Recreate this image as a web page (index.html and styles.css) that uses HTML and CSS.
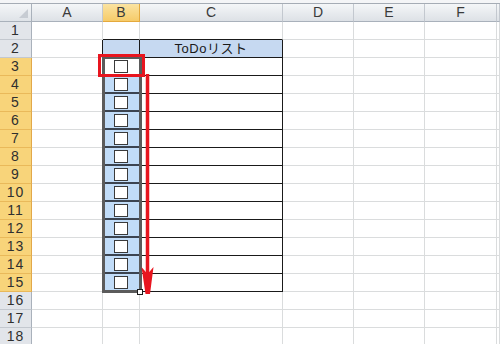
FILE: index.html
```html
<!DOCTYPE html>
<html lang="ja">

<head>
  <meta charset="UTF-8">
  <title>ToDoリスト</title>
  <link rel="stylesheet" href="styles.css">
</head>

<body>
  <div class="wrap">
    <div class="sheet" id="sheet"></div>

    <!-- selection B3:B15 -->
    <div class="selection"></div>
    <div class="handle"></div>

    <!-- red marks -->
    <svg class="marks" width="500" height="344" viewBox="0 0 500 344">
      <rect x="99.5" y="55.5" width="44" height="20" fill="none" stroke="#e8151f" stroke-width="3" />
      <line x1="147.5" y1="74" x2="147.5" y2="280" stroke="#e8151f" stroke-width="3.5" />
      <polygon points="141.5,267 147.5,274 153.5,267 150,294 145.5,294" fill="#e8151f" />
    </svg>
  </div>

  <script>
    var cols = ['', 'A', 'B', 'C', 'D', 'E', 'F', ''];
    var sheet = document.getElementById('sheet');

    function addCell(cls, html) {
      var div = document.createElement('div');
      div.className = cls;
      if (html) {
        div.innerHTML = html;
      }
      sheet.appendChild(div);
    }

    // column headers
    for (var i = 0; i < cols.length; i++) {
      if (i === 0) {
        addCell('corner', '<span class="tri"></span>');
      } else if (i === 2) {
        addCell('hdr hdr-sel', cols[i]);
      } else {
        addCell('hdr', cols[i]);
      }
    }

    for (var r = 1; r <= 18; r++) {
      var inSel = r >= 3 && r <= 15;
      addCell('rh' + (inSel ? ' rh-sel' : ''), r);

      // A
      addCell('cell' + (r >= 2 && r <= 15 ? ' edge-r' : ''));

      // B
      if (r === 1) {
        addCell('cell edge-b');
      } else if (r === 2) {
        addCell('cell tbl title');
      } else if (inSel) {
        addCell('cell tbl box' + (r > 3 ? ' sel' : ''), '<span class="chk"></span>');
      } else {
        addCell('cell');
      }

      // C
      if (r === 1) {
        addCell('cell edge-b');
      } else if (r === 2) {
        addCell('cell tbl title', 'ToDoリスト');
      } else if (inSel) {
        addCell('cell tbl');
      } else {
        addCell('cell');
      }

      // D, E, F, G
      for (var c = 4; c < cols.length; c++) {
        addCell('cell');
      }
    }
  </script>
</body>

</html>
```

FILE: styles.css
```css
* {
  box-sizing: border-box;
}

body {
  margin: 0;
  background: #ffffff;
  font-family: 'Liberation Sans', 'Noto Sans CJK JP', sans-serif;
  color: #333333;
}

.wrap {
  position: relative;
  width: 500px;
  height: 344px;
  overflow: hidden;
  padding-top: 3px;
  background: #f4f5f7;
}

.sheet {
  display: grid;
  grid-template-columns: 32px 71px 37px 143px 71px 71px 72px 1fr;
  grid-auto-rows: 18px;
  background: #ffffff;
  border-top: 1px solid #a5acb5;
}

/* headers */
.corner {
  position: relative;
  background: linear-gradient(#f4f6f8, #dfe3e8);
  border-right: 1px solid #a9b1bb;
  border-bottom: 1px solid #a9b1bb;
}

.tri {
  position: absolute;
  right: 3px;
  bottom: 3px;
  width: 0;
  height: 0;
  border-left: 9px solid transparent;
  border-bottom: 9px solid #c7ccd3;
}

.hdr {
  background: linear-gradient(#f4f6f8, #dde1e6);
  border-right: 1px solid #c3c8cf;
  border-bottom: 1px solid #a9b1bb;
  font-size: 14px;
  line-height: 17px;
  text-align: center;
  color: #3a3a3a;
}

.hdr-sel {
  background: linear-gradient(#fbe3a1, #f6cb69);
  border-right: 1px solid #e4a93d;
  border-bottom: 1px solid #e4a93d;
}

.rh {
  background: #e2e5ea;
  border-right: 1px solid #a9b1bb;
  border-bottom: 1px solid #c3c8cf;
  font-size: 14px;
  line-height: 17px;
  letter-spacing: 1px;
  text-align: center;
  color: #2f2f2f;
}

.rh-sel {
  background: #f8d47a;
  border-right: 1px solid #e2a84a;
  border-bottom: 1px solid #e9b95a;
}

/* cells */
.cell {
  border-right: 1px solid #dadcdd;
  border-bottom: 1px solid #dadcdd;
}

.edge-r {
  border-right: 1px solid #1a1a1a;
}

.edge-b {
  border-bottom: 1px solid #1a1a1a;
}

.tbl {
  border-right: 1px solid #1a1a1a;
  border-bottom: 1px solid #1a1a1a;
}

.title {
  background: #c6d9f1;
  font-size: 13px;
  line-height: 17px;
  letter-spacing: 0.5px;
  text-align: center;
  color: #1a1a1a;
}

.box {
  display: flex;
  align-items: center;
  justify-content: center;
  border-bottom: 2px solid #3c4450;
}

.sel {
  background: #c1dcf8;
}

.chk {
  width: 14px;
  height: 13px;
  margin-top: 1px;
  border: 1.5px solid #3a3a3a;
  background: #ffffff;
}

/* overlays */
.selection {
  position: absolute;
  left: 102px;
  top: 56px;
  width: 40px;
  height: 237px;
  border: 3px solid #5b5b5b;
}

.handle {
  position: absolute;
  left: 137px;
  top: 289px;
  width: 6px;
  height: 6px;
  background: #ffffff;
  border: 1.5px solid #1a1a1a;
}

.marks {
  position: absolute;
  left: 0;
  top: 0;
}
```
